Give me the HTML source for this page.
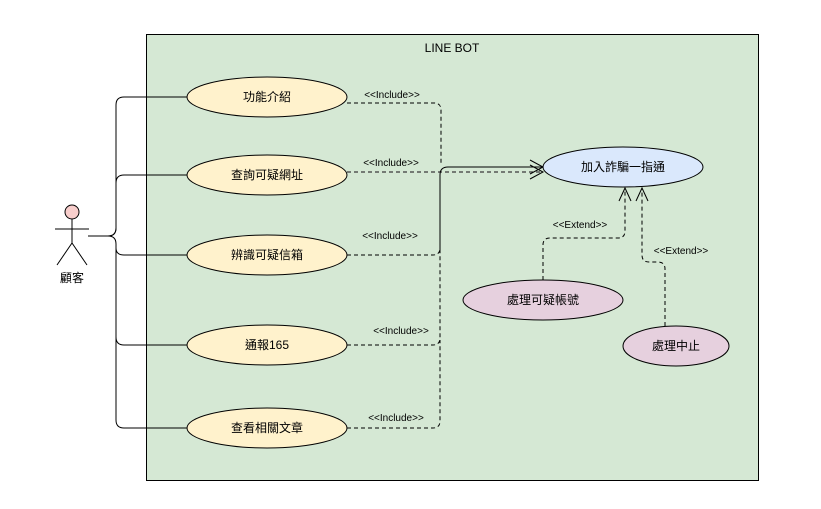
<!DOCTYPE html>
<html><head><meta charset="utf-8"><style>body{margin:0;background:#fff}svg{display:block}text{font-family:"Liberation Sans","Noto Sans CJK TC",sans-serif}</style></head>
<body>
<svg width="821" height="509" viewBox="0 0 821 509" xmlns="http://www.w3.org/2000/svg">
<rect x="146.5" y="34.5" width="612" height="446" fill="#d5e8d4" stroke="#000"/>
<text x="452" y="52" font-size="12" text-anchor="middle">LINE BOT</text>
<circle cx="72" cy="212" r="7" fill="#f8cecc" stroke="#000"/>
<g stroke="#000" fill="none" stroke-width="1">
<path d="M72 219V243M55 229H89M72 243L57 265M72 243L87 265"/>
<path d="M88 236H108Q116 236 116 228V105Q116 97 124 97H187"/>
<path d="M108 236Q116 236 116 228V183Q116 175 124 175H187"/>
<path d="M108 236Q116 236 116 244V248Q116 255 124 255H187"/>
<path d="M116 244V337Q116 345 124 345H187"/>
<path d="M116 337V420Q116 428 124 428H187"/>
<g stroke-dasharray="4 3">
<path d="M347 103H434Q441 103 441 110V163"/>
<path d="M347 172H540" stroke="#555" stroke-width="1.5"/>
<path d="M347 255H433Q440 255 440 248V175"/>
<path d="M347 345H433Q440 345 440 338V250"/>
<path d="M347 428H433Q440 428 440 421V340"/>
<path d="M543 280V245Q543 238 550 238H618Q625 238 625 231V188"/>
<path d="M665 326V269Q665 262 658 262H649Q642 262 642 255V188"/>
</g>
<path d="M440 250V175Q440 167 448 167H543"/>
<path d="M530 160L543 167L530 174M530 165L543 172L530 179"/>
</g>
<text x="72" y="282" font-size="12" text-anchor="middle">顧客</text>
<g stroke="#000" fill="#fff2cc">
<ellipse cx="267" cy="97" rx="80" ry="20"/>
<ellipse cx="267" cy="175" rx="80" ry="20"/>
<ellipse cx="267" cy="255" rx="80" ry="20"/>
<ellipse cx="267" cy="345" rx="80" ry="20"/>
<ellipse cx="267" cy="428" rx="80" ry="20"/>
<ellipse cx="623" cy="167" rx="80" ry="20" fill="#dae8fc"/>
<ellipse cx="543" cy="300" rx="80" ry="20" fill="#e6d0de"/>
<ellipse cx="676" cy="346" rx="53" ry="20" fill="#e6d0de"/>
</g>
<path d="M619 201L625 188L631 201M636 201L642 188L648 201" stroke="#000" fill="none"/>
<g font-size="12" text-anchor="middle">
<text x="267" y="101">功能介紹</text>
<text x="267" y="179">查詢可疑網址</text>
<text x="267" y="259">辨識可疑信箱</text>
<text x="267" y="349">通報165</text>
<text x="267" y="432">查看相關文章</text>
<text x="623" y="171">加入詐騙一指通</text>
<text x="543" y="304">處理可疑帳號</text>
<text x="676" y="350">處理中止</text>
</g>
<g font-size="10" text-anchor="middle">
<text x="392" y="98">&lt;&lt;Include&gt;&gt;</text>
<text x="391" y="166">&lt;&lt;Include&gt;&gt;</text>
<text x="390" y="239">&lt;&lt;Include&gt;&gt;</text>
<text x="401" y="334">&lt;&lt;Include&gt;&gt;</text>
<text x="396" y="421">&lt;&lt;Include&gt;&gt;</text>
<text x="580" y="228">&lt;&lt;Extend&gt;&gt;</text>
<text x="681" y="254">&lt;&lt;Extend&gt;&gt;</text>
</g>
</svg>
</body></html>
